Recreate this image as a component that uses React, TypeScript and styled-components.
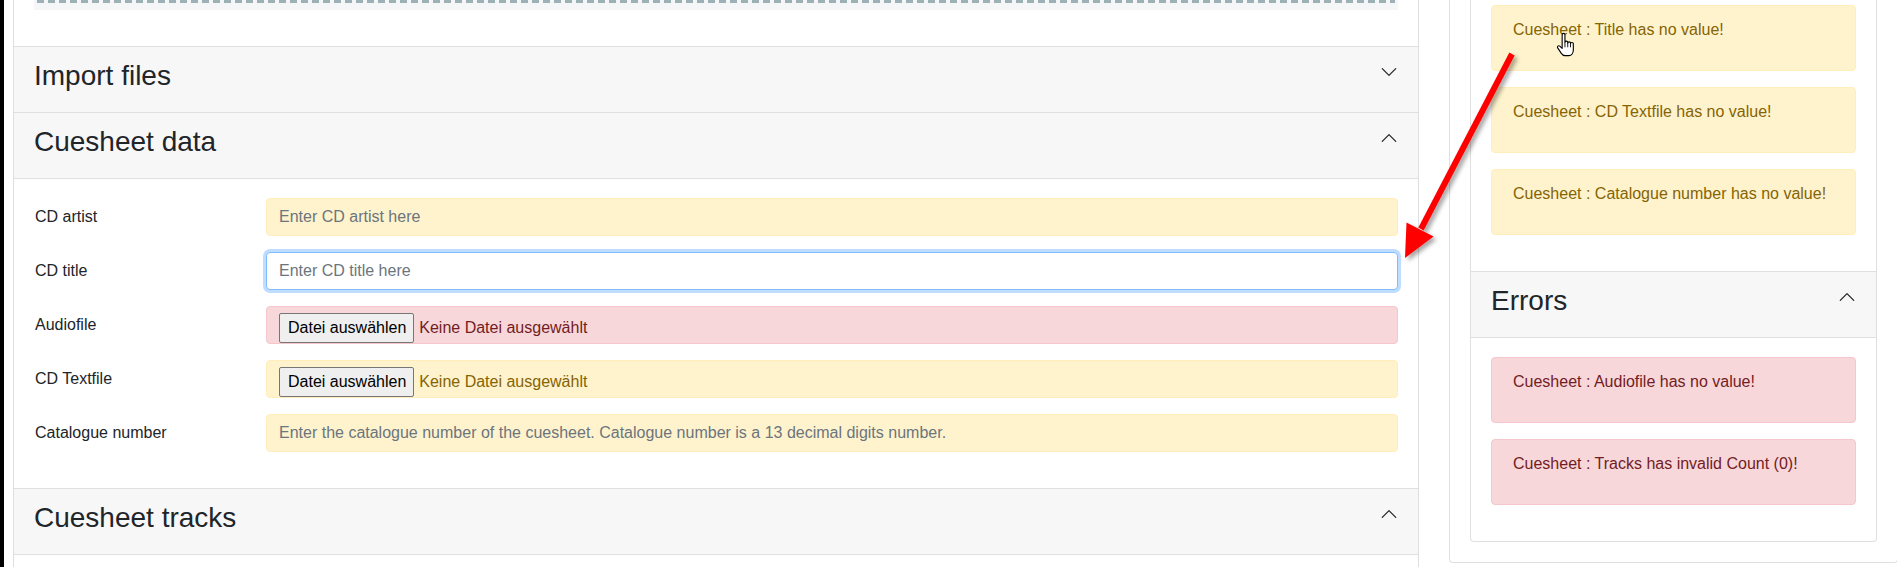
import React from "react";
import styled, { createGlobalStyle, css } from "styled-components";

const GlobalStyle = createGlobalStyle`
  html, body { margin: 0; padding: 0; background: #ffffff; }
  body {
    font-family: "Liberation Sans", Arial, sans-serif;
    font-size: 16px;
    line-height: 1.5;
    color: #212529;
    overflow: hidden;
  }
  *, *::before, *::after { box-sizing: border-box; }
`;

type Tone = "warning" | "danger" | "focus";

const tones = {
  warning: { bg: "#fff3cd", border: "#ffeeba", text: "#856404" },
  danger: { bg: "#f8d7da", border: "#f5c6cb", text: "#721c24" },
  focus: { bg: "#ffffff", border: "#80bdff", text: "#495057" },
};

const Page = styled.div`
  position: relative;
  width: 1897px;
  height: 567px;
  overflow: hidden;
  display: flex;
  align-items: flex-start;
`;

const WindowEdge = styled.div`
  width: 4px;
  height: 567px;
  background: #000000;
  flex-shrink: 0;
`;

const LeftColumn = styled.div`
  width: 1406px;
  margin-left: 9px;
  flex-shrink: 0;
`;

const RightColumn = styled.div`
  width: 449px;
  margin-left: 30px;
  flex-shrink: 0;
`;

const Card = styled.div`
  border: 1px solid #dfdfdf;
  border-top: none;
  background: #ffffff;
`;

const OuterCard = styled(Card)`
  border-radius: 0 0 4px 4px;
  padding: 0 20px 20px;
`;

const InnerCard = styled(Card)`
  border-radius: 0 0 4px 4px;
`;

const TopBody = styled.div`
  padding: 0 20px 20px;
`;

const DropArea = styled.div`
  background: #f5f6f7;
  padding: 0 3px 7px;
  margin-bottom: 16px;
`;

const DashedEdge = styled.div`
  height: 3px;
  background: repeating-linear-gradient(
    to right,
    #9cb0b6 0px,
    #9cb0b6 7px,
    transparent 7px,
    transparent 11px
  );
`;

const Item = styled.section`
  border-top: 1px solid #dfdfdf;
`;

const ItemHeader = styled.div`
  height: 65px;
  background: #f7f7f7;
  padding: 12px 20px 19px;
  display: flex;
  align-items: flex-start;
  justify-content: space-between;
`;

const ItemTitle = styled.h3`
  margin: 0;
  font-size: 28px;
  font-weight: 400;
  line-height: 34px;
  color: #212529;
`;

const ChevronIcon = styled.svg`
  width: 18px;
  height: 18px;
  margin-top: 4px;
  flex-shrink: 0;
`;

const ItemBody = styled.div`
  border-top: 1px solid #dfdfdf;
  padding: 19px 20px 20px;
`;

const PlainBody = styled.div`
  padding: 5px 20px 20px;
`;

const FormRow = styled.div`
  display: grid;
  grid-template-columns: 232px 1fr;
  margin-bottom: 16px;
`;

const FieldLabel = styled.label`
  padding: 7px 0 7px 1px;
  font-size: 16px;
  line-height: 1.5;
  color: #212529;
`;

const fieldBase = css<{ $tone: Tone }>`
  height: 38px;
  width: 100%;
  padding: 6px 12px;
  border: 1px solid ${(p) => tones[p.$tone].border};
  border-radius: 4px;
  background: ${(p) => tones[p.$tone].bg};
  color: ${(p) => tones[p.$tone].text};
  font-family: "Liberation Sans", Arial, sans-serif;
  font-size: 16px;
  line-height: 1.5;
  ${(p) =>
    p.$tone === "focus" &&
    css`
      box-shadow: 0 0 0 3px rgba(0, 123, 255, 0.25);
    `}
`;

const TextInput = styled.input<{ $tone: Tone }>`
  ${fieldBase};
  display: block;
  outline: none;
  &::placeholder {
    color: #6c757d;
    opacity: 1;
  }
`;

const FileField = styled.div<{ $tone: Tone }>`
  ${fieldBase};
  display: flex;
  align-items: flex-start;
`;

const FileButton = styled.button`
  height: 30px;
  padding: 0 7px 0 8px;
  border: 1px solid #767676;
  border-radius: 2px;
  background: #efefef;
  color: #000000;
  font-family: "Liberation Sans", Arial, sans-serif;
  font-size: 16px;
  line-height: 28px;
  flex-shrink: 0;
`;

const FileStatus = styled.span`
  margin-left: 5px;
  line-height: 30px;
  white-space: nowrap;
`;

const Alert = styled.div<{ $tone: "warning" | "danger" }>`
  padding: 12px 20px 28px 21px;
  margin-bottom: 16px;
  border: 1px solid ${(p) => tones[p.$tone].border};
  border-radius: 4px;
  background: ${(p) => tones[p.$tone].bg};
  color: ${(p) => tones[p.$tone].text};
  font-size: 16px;
  line-height: 24px;
`;

const Overlay = styled.svg`
  position: absolute;
  left: 0;
  top: 0;
  pointer-events: none;
`;

const Cursor = styled.svg`
  position: absolute;
  left: 1556px;
  top: 32px;
  width: 19px;
  height: 25px;
  pointer-events: none;
`;

const Chevron = ({ up }: { up?: boolean }) => (
  <ChevronIcon
    viewBox="0 0 16 16"
    fill="none"
    stroke="#212529"
    strokeWidth={1.1}
    strokeLinecap="round"
    strokeLinejoin="round"
  >
    <path d={up ? "M2 11L8 5L14 11" : "M2 5L8 11L14 5"} />
  </ChevronIcon>
);

const SectionHeader = ({ title, open }: { title: string; open?: boolean }) => (
  <ItemHeader>
    <ItemTitle>{title}</ItemTitle>
    <Chevron up={open} />
  </ItemHeader>
);

const TextRow = ({
  label,
  placeholder,
  tone,
}: {
  label: string;
  placeholder: string;
  tone: Tone;
}) => (
  <FormRow>
    <FieldLabel>{label}</FieldLabel>
    <TextInput $tone={tone} placeholder={placeholder} readOnly />
  </FormRow>
);

const FileRow = ({ label, tone }: { label: string; tone: Tone }) => (
  <FormRow>
    <FieldLabel>{label}</FieldLabel>
    <FileField $tone={tone}>
      <FileButton type="button">Datei auswählen</FileButton>
      <FileStatus>Keine Datei ausgewählt</FileStatus>
    </FileField>
  </FormRow>
);

const warnings = [
  "Cuesheet : Title has no value!",
  "Cuesheet : CD Textfile has no value!",
  "Cuesheet : Catalogue number has no value!",
];

const errors = [
  "Cuesheet : Audiofile has no value!",
  "Cuesheet : Tracks has invalid Count (0)!",
];

export default function App() {
  return (
    <>
      <GlobalStyle />
      <Page>
        <WindowEdge />
        <LeftColumn>
          <Card>
            <TopBody>
              <DropArea>
                <DashedEdge />
              </DropArea>
            </TopBody>
            <Item>
              <SectionHeader title="Import files" />
            </Item>
            <Item>
              <SectionHeader title="Cuesheet data" open />
              <ItemBody>
                <TextRow label="CD artist" placeholder="Enter CD artist here" tone="warning" />
                <TextRow label="CD title" placeholder="Enter CD title here" tone="focus" />
                <FileRow label="Audiofile" tone="danger" />
                <FileRow label="CD Textfile" tone="warning" />
                <TextRow
                  label="Catalogue number"
                  placeholder="Enter the catalogue number of the cuesheet. Catalogue number is a 13 decimal digits number."
                  tone="warning"
                />
              </ItemBody>
            </Item>
            <Item>
              <SectionHeader title="Cuesheet tracks" open />
              <ItemBody />
            </Item>
          </Card>
        </LeftColumn>
        <RightColumn>
          <OuterCard>
            <InnerCard>
              <PlainBody>
                {warnings.map((w) => (
                  <Alert key={w} $tone="warning">
                    {w}
                  </Alert>
                ))}
              </PlainBody>
              <Item>
                <SectionHeader title="Errors" open />
                <ItemBody>
                  {errors.map((e) => (
                    <Alert key={e} $tone="danger">
                      {e}
                    </Alert>
                  ))}
                </ItemBody>
              </Item>
            </InnerCard>
          </OuterCard>
        </RightColumn>

        <Overlay width={1897} height={567} viewBox="0 0 1897 567">
          <defs>
            <filter id="arrowShadow" x="-20%" y="-20%" width="140%" height="140%">
              <feDropShadow dx="3" dy="3" stdDeviation="2.2" floodColor="#000000" floodOpacity="0.35" />
            </filter>
          </defs>
          <g filter="url(#arrowShadow)">
            <line x1={1512} y1={54} x2={1421} y2={229} stroke="#ff0000" strokeWidth={6} />
            <polygon points="1405,258 1406.5,222.5 1433.5,236.5" fill="#ff0000" />
          </g>
        </Overlay>

        <Cursor viewBox="0 0 17 22">
          <path
            d="M5.5 2.2 C5.5 0.6 8 0.6 8 2.2 V9 C8 7.7 10.5 7.7 10.5 9 V9.6 C10.5 8.3 13 8.3 13 9.6 V10.2 C13 8.9 15.5 8.9 15.5 10.2 V16 C15.5 18.6 14 21 11.5 21 H8 C6.6 21 5.6 20.2 4.6 18.7 L1.5 14 C0.8 12.9 2.1 11.5 3.4 12.5 L5.5 14.4 Z"
            fill="#ffffff"
            stroke="#000000"
            strokeWidth={1}
            strokeLinejoin="round"
          />
          <path d="M8 9 V13.5 M10.5 9.6 V13.5 M13 10.2 V13.5" stroke="#000000" strokeWidth={0.8} fill="none" />
        </Cursor>
      </Page>
    </>
  );
}
